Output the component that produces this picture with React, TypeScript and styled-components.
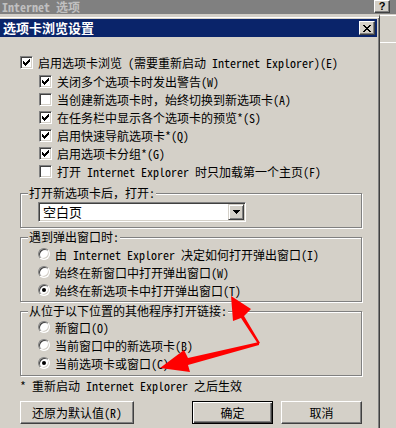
import React from 'react';
import styled, { createGlobalStyle } from 'styled-components';

const FACE = '#d4d0c8';

const GlobalStyle = createGlobalStyle`
  html, body {
    margin: 0;
    padding: 0;
    background: ${FACE};
  }
  body {
    font-family: "Noto Sans Mono CJK SC", "Noto Sans CJK SC", "Liberation Mono", monospace;
    font-size: 12px;
    color: #000;
  }
`;

const Screen = styled.div`
  position: relative;
  width: 396px;
  height: 428px;
  overflow: hidden;
  display: flex;
  flex-direction: column;
  background: ${FACE};
`;

const ParentTitle = styled.div`
  height: 14px;
  flex-shrink: 0;
  box-sizing: border-box;
  background: #808080;
  display: flex;
  align-items: flex-start;
  justify-content: space-between;
  padding: 0 6px 0 2px;
`;

const ParentTitleText = styled.span`
  margin-top: 1px;
  color: #c0c0c0;
  font-weight: 700;
  font-size: 12px;
  line-height: 12px;
  height: 12px;
`;

const RaisedButton = styled.button<{ $w: number; $h: number }>`
  width: ${p => p.$w}px;
  height: ${p => p.$h}px;
  padding: 0;
  margin: 0;
  background: ${FACE};
  border: 1px solid;
  border-color: #fff #404040 #404040 #fff;
  box-shadow: inset -1px -1px 0 #808080;
  display: flex;
  align-items: center;
  justify-content: center;
  font-family: inherit;
  color: #000;
`;

const HelpGlyph = styled.span`
  font-family: "Liberation Sans", sans-serif;
  font-weight: 700;
  font-size: 11px;
  line-height: 11px;
`;

const Main = styled.div`
  flex: 1;
  display: flex;
`;

const Dialog = styled.div`
  width: 380px;
  flex-shrink: 0;
  box-sizing: border-box;
  border-top: 3px solid ${FACE};
  border-right: 1px solid #404040;
  box-shadow: inset 0 1px 0 #fff, inset -1px 0 0 #808080;
  padding: 2px 2px 0 0;
  display: flex;
  flex-direction: column;
`;

const SideStrip = styled.div`
  flex: 1;
  margin-top: 1px;
  border-top: 1px solid #fff;
  display: flex;
  flex-direction: column;
`;

const SideEdge = styled.div`
  margin-top: 26px;
  border-top: 1px solid #fff;
`;

const TitleBar = styled.div`
  height: 18px;
  background: #0a246a;
  display: flex;
  align-items: center;
  justify-content: space-between;
  padding: 0 2px 0 3px;
`;

const TitleText = styled.span`
  color: #fff;
  font-weight: 700;
  font-size: 13px;
  line-height: 18px;
`;

const Body = styled.div`
  padding: 16px 15px 0 20px;
  display: flex;
  flex-direction: column;
`;

const Row = styled.label`
  height: 18px;
  display: flex;
  align-items: center;
  gap: 5px;
  white-space: nowrap;
`;

const SubList = styled.div`
  margin: 1px 0 0 19px;
  display: flex;
  flex-direction: column;
`;

const CheckBox = styled.span`
  width: 13px;
  height: 13px;
  box-sizing: border-box;
  flex-shrink: 0;
  background: #fff;
  border: 1px solid;
  border-color: #808080 #fff #fff #808080;
  box-shadow: inset 1px 1px 0 #404040, inset -1px -1px 0 ${FACE};
  display: flex;
  align-items: center;
  justify-content: center;
`;

const RadioDot = styled.span<{ $on: boolean }>`
  width: 12px;
  height: 12px;
  box-sizing: border-box;
  flex-shrink: 0;
  border-radius: 50%;
  background: #fff;
  border: 1px solid;
  border-color: #808080 #fff #fff #808080;
  box-shadow: inset 1px 1px 0 #404040, inset -1px -1px 0 ${FACE};
  display: flex;
  align-items: center;
  justify-content: center;

  &::after {
    content: '';
    width: 4px;
    height: 4px;
    border-radius: 50%;
    background: ${p => (p.$on ? '#000' : 'transparent')};
  }
`;

const Group = styled.fieldset<{ $gap: number }>`
  margin: ${p => p.$gap}px 0 0 0;
  padding: 0;
  min-width: 0;
  border: 1px solid #808080;
  box-shadow: inset 1px 1px 0 #fff, 1px 1px 0 #fff;
`;

const GroupTitle = styled.legend`
  margin-left: 7px;
  padding: 0 1px;
  line-height: 14px;
  height: 14px;
  background: ${FACE};
`;

const GroupBody = styled.div<{ $pt: number; $pb: number }>`
  padding: ${p => p.$pt}px 0 ${p => p.$pb}px 17px;
  display: flex;
  flex-direction: column;
`;

const Combo = styled.div`
  width: 208px;
  height: 20px;
  box-sizing: border-box;
  background: #fff;
  border: 1px solid;
  border-color: #808080 #fff #fff #808080;
  box-shadow: inset 1px 1px 0 #404040, inset -1px -1px 0 ${FACE};
  padding: 1px;
  display: flex;
  align-items: center;
`;

const ComboText = styled.span`
  flex: 1;
  padding-left: 3px;
  font-size: 13px;
  line-height: 16px;
`;

const ComboButton = styled.span`
  width: 16px;
  height: 16px;
  box-sizing: border-box;
  background: ${FACE};
  border: 1px solid;
  border-color: ${FACE} #404040 #404040 ${FACE};
  box-shadow: inset 1px 1px 0 #fff, inset -1px -1px 0 #808080;
  display: flex;
  align-items: center;
  justify-content: center;
`;

const Note = styled.div`
  margin-top: 1px;
  height: 18px;
  line-height: 18px;
  white-space: nowrap;
`;

const Buttons = styled.div`
  margin-top: 6px;
  display: flex;
  align-items: center;
  gap: 8px;
`;

const PushButton = styled.button<{ $w: number; $default?: boolean }>`
  width: ${p => p.$w}px;
  height: 23px;
  padding: 0;
  margin: 0;
  font-family: inherit;
  font-size: 12px;
  color: #000;
  background: ${FACE};
  border: 1px solid;
  border-color: ${p => (p.$default ? '#000' : '#fff #404040 #404040 #fff')};
  box-shadow: ${p =>
    p.$default
      ? 'inset 1px 1px 0 #fff, inset -1px -1px 0 #404040, inset -2px -2px 0 #808080'
      : 'inset -1px -1px 0 #808080'};
`;

const Spacer = styled.div`
  flex: 1;
`;

const Overlay = styled.svg`
  position: absolute;
  left: 0;
  top: 0;
  pointer-events: none;
`;

const checkPath = [2, 3, 4, 3, 2, 1, 0].map((y, x) => `M${x} ${y}h1v3h-1z`).join('');

const Check = ({ on }: { on: boolean }) => (
  <CheckBox>
    {on && (
      <svg width="7" height="7" viewBox="0 0 7 7" shapeRendering="crispEdges">
        <path d={checkPath} fill="#000" />
      </svg>
    )}
  </CheckBox>
);

const tabOptions = [
  { label: '关闭多个选项卡时发出警告(W)', on: true },
  { label: '当创建新选项卡时，始终切换到新选项卡(A)', on: false },
  { label: '在任务栏中显示各个选项卡的预览*(S)', on: true },
  { label: '启用快速导航选项卡*(Q)', on: true },
  { label: '启用选项卡分组*(G)', on: true },
  { label: '打开 Internet Explorer 时只加载第一个主页(F)', on: false },
];

const popupOptions = [
  { label: '由 Internet Explorer 决定如何打开弹出窗口(I)', on: false },
  { label: '始终在新窗口中打开弹出窗口(W)', on: false },
  { label: '始终在新选项卡中打开弹出窗口(T)', on: true },
];

const linkOptions = [
  { label: '新窗口(O)', on: false },
  { label: '当前窗口中的新选项卡(B)', on: false },
  { label: '当前选项卡或窗口(C)', on: true },
];

// red call-out arrows drawn on top of the screenshot
const arrowUp = '258,344 241,318 233,321 231,296 251,309 244,316 260,343';
const arrowLeft = '259,342 188,358 184,350 160,368 190,372 188,365 259,345';

export default function App() {
  return (
    <>
      <GlobalStyle />
      <Screen>
        <ParentTitle>
          <ParentTitleText>Internet 选项</ParentTitleText>
          <RaisedButton $w={16} $h={13}>
            <HelpGlyph>?</HelpGlyph>
          </RaisedButton>
        </ParentTitle>
        <Main>
          <Dialog>
            <TitleBar>
              <TitleText>选项卡浏览设置</TitleText>
              <RaisedButton $w={16} $h={14}>
                <svg width="8" height="7" viewBox="0 0 8 7" shapeRendering="crispEdges">
                  <path d="M0 0h2v1h-2zM6 0h2v1h-2zM1 1h2v1h-2zM5 1h2v1h-2zM2 2h4v1h-4zM3 3h2v1h-2zM2 4h4v1h-4zM1 5h2v1h-2zM5 5h2v1h-2zM0 6h2v1h-2zM6 6h2v1h-2z" fill="#000" />
                </svg>
              </RaisedButton>
            </TitleBar>
            <Body>
              <Row>
                <Check on />
                启用选项卡浏览 (需要重新启动 Internet Explorer)(E)
              </Row>
              <SubList>
                {tabOptions.map(o => (
                  <Row key={o.label}>
                    <Check on={o.on} />
                    {o.label}
                  </Row>
                ))}
              </SubList>

              <Group $gap={6}>
                <GroupTitle>打开新选项卡后，打开:</GroupTitle>
                <GroupBody $pt={2} $pb={5}>
                  <Combo>
                    <ComboText>空白页</ComboText>
                    <ComboButton>
                      <svg width="7" height="4" viewBox="0 0 7 4" shapeRendering="crispEdges">
                        <path d="M0 0h7v1h-7zM1 1h5v1h-5zM2 2h3v1h-3zM3 3h1v1h-1z" fill="#000" />
                      </svg>
                    </ComboButton>
                  </Combo>
                </GroupBody>
              </Group>

              <Group $gap={2}>
                <GroupTitle>遇到弹出窗口时:</GroupTitle>
                <GroupBody $pt={1} $pb={2}>
                  {popupOptions.map(o => (
                    <Row key={o.label}>
                      <RadioDot $on={o.on} />
                      {o.label}
                    </Row>
                  ))}
                </GroupBody>
              </Group>

              <Group $gap={2}>
                <GroupTitle>从位于以下位置的其他程序打开链接:</GroupTitle>
                <GroupBody $pt={0} $pb={3}>
                  {linkOptions.map(o => (
                    <Row key={o.label}>
                      <RadioDot $on={o.on} />
                      {o.label}
                    </Row>
                  ))}
                </GroupBody>
              </Group>

              <Note>* 重新启动 Internet Explorer 之后生效</Note>

              <Buttons>
                <PushButton $w={114}>还原为默认值(R)</PushButton>
                <Spacer />
                <PushButton $w={81} $default>确定</PushButton>
                <PushButton $w={81}>取消</PushButton>
              </Buttons>
            </Body>
          </Dialog>
          <SideStrip>
            <SideEdge />
          </SideStrip>
        </Main>
        <Overlay width="396" height="428" viewBox="0 0 396 428">
          <polygon points={arrowUp} fill="#f00" />
          <polygon points={arrowLeft} fill="#f00" />
        </Overlay>
      </Screen>
    </>
  );
}
